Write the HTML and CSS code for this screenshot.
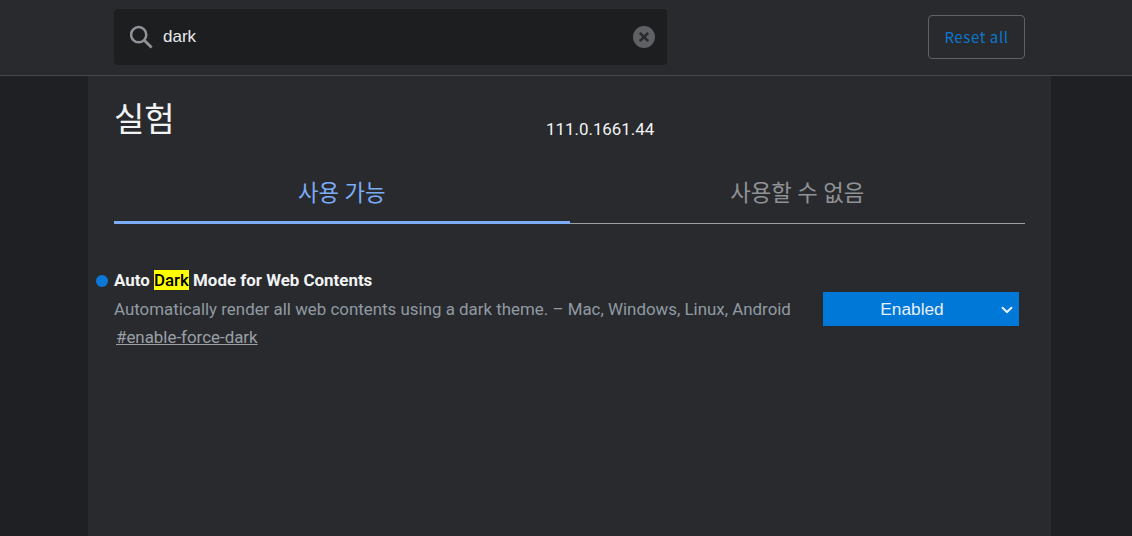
FILE: index.html
```html
<html>
<head>
<title>Experiments</title>
<meta name="viewport" content="width=device-width, initial-scale=1">
<link rel="stylesheet" href="styles.css">
</head>
<body>
<div class="header">
  <div class="search">
    <svg class="search-icon" width="24" height="24" viewBox="0 0 24 24"><circle cx="8.7" cy="9.7" r="7.6" fill="none" stroke="#8f9296" stroke-width="2.5"/><path d="M14.2 15.2L21.6 22.6" stroke="#8f9296" stroke-width="2.8" fill="none"/></svg>
    <span class="search-text">dark</span>
    <svg class="clear-icon" width="22" height="22" viewBox="0 0 22 22"><circle cx="11" cy="11" r="11" fill="#5f6165"/><path d="M6.8 6.8L15.2 15.2M15.2 6.8L6.8 15.2" stroke="#292a2d" stroke-width="2.6" fill="none"/></svg>
  </div>
  <button class="reset">Reset all</button>
</div>
<div class="content">
  <div class="title-row">
    <h1 class="title">실험</h1>
    <span class="version">111.0.1661.44</span>
  </div>
  <div class="tabs">
    <div class="tab active">사용 가능</div>
    <div class="tab">사용할 수 없음</div>
  </div>
  <div class="flag">
    <div class="flag-text">
      <div class="flag-name"><span class="dot"></span>Auto <mark class="hit">Dark</mark> Mode for Web Contents</div>
      <p class="flag-desc">Automatically render all web contents using a dark theme. – Mac, Windows, Linux, Android</p>
      <a class="flag-link" href="#">#enable-force-dark</a>
    </div>
    <div class="select">
      <span>Enabled</span>
      <svg class="chevron" width="12" height="8" viewBox="0 0 12 8"><path d="M1 1.2L6 6L11 1.2" fill="none" stroke="#e8f0fa" stroke-width="2"/></svg>
    </div>
  </div>
</div>
</body>
</html>
```

FILE: styles.css
```css
html, body {
  height: 100%;
}

body {
  margin: 0;
  background: #1f2023;
  font-family: Roboto, "Noto Sans CJK KR", sans-serif;
  color: #e8eaed;
  overflow: hidden;
}

.header {
  height: 76px;
  background: #292a2d;
  border-bottom: 1px solid #47484b;
  display: flex;
  align-items: flex-start;
  justify-content: space-between;
  padding: 9px 107px 0 114px;
  box-sizing: border-box;
}

.search {
  width: 553px;
  height: 56px;
  background: #1d1e20;
  border-radius: 4px;
  display: flex;
  align-items: center;
  padding: 0 12px 0 16px;
  box-sizing: border-box;
}

.search-icon {
  flex: none;
}

.search-text {
  flex: 1;
  margin-left: 9px;
  font-family: "Liberation Sans", sans-serif;
  font-size: 17px;
  color: #e8eaed;
}

.reset {
  width: 97px;
  height: 44px;
  margin-top: 6px;
  background: transparent;
  border: 1px solid #5f6165;
  border-radius: 4px;
  color: #0b78d0;
  font-family: "Noto Sans CJK KR", sans-serif;
  font-size: 15px;
  letter-spacing: 0.6px;
  padding: 0 0 2px;
}

.content {
  width: 963px;
  height: 460px;
  margin-left: 88px;
  padding: 0 26px;
  box-sizing: border-box;
  background: #292a2d;
}

.title-row {
  height: 71px;
  display: flex;
}

.title {
  margin: 22px 0 0;
  font-size: 33px;
  line-height: 44px;
  font-weight: 400;
  color: #f1f3f4;
  width: 432px;
}

.version {
  margin-top: 43px;
  font-size: 16.9px;
  line-height: 20px;
  color: #f1f3f4;
}

.tabs {
  display: flex;
  height: 77px;
  border-bottom: 1px solid #9aa0a6;
  box-sizing: border-box;
}

.tab {
  width: 456px;
  text-align: center;
  font-size: 22.3px;
  line-height: 30px;
  padding-top: 31px;
  color: #8f9296;
  box-sizing: border-box;
}

.tab.active {
  color: #7cacf8;
  border-bottom: 3px solid #7cacf8;
  height: 77px;
}

.flag {
  display: flex;
  justify-content: space-between;
  align-items: flex-start;
  padding: 46px 6px 0 0;
}

.flag-name {
  position: relative;
  font-size: 16.9px;
  line-height: 20px;
  font-weight: 700;
  color: #f1f3f4;
}

.dot {
  position: absolute;
  left: -18px;
  top: 5px;
  width: 12px;
  height: 12px;
  border-radius: 50%;
  background: #0b78d8;
}

.hit {
  background: #ffff00;
  color: #000;
  font-weight: 500;
}

.flag-desc {
  margin: 9px 0 0;
  font-size: 16.9px;
  line-height: 20px;
  color: #8f9aa3;
}

.flag-link {
  display: inline-block;
  margin: 8px 0 0 2px;
  font-size: 16.9px;
  line-height: 20px;
  color: #9aa0a6;
  text-decoration: underline;
}

.select {
  width: 196px;
  height: 34px;
  margin-top: 22px;
  background: #0078d7;
  position: relative;
  display: flex;
  align-items: center;
  justify-content: center;
  font-family: "Liberation Sans", sans-serif;
  font-size: 17.3px;
  color: #e8f0fa;
  padding-right: 18px;
  box-sizing: border-box;
}

.chevron {
  position: absolute;
  right: 6px;
  top: 14px;
}
```
